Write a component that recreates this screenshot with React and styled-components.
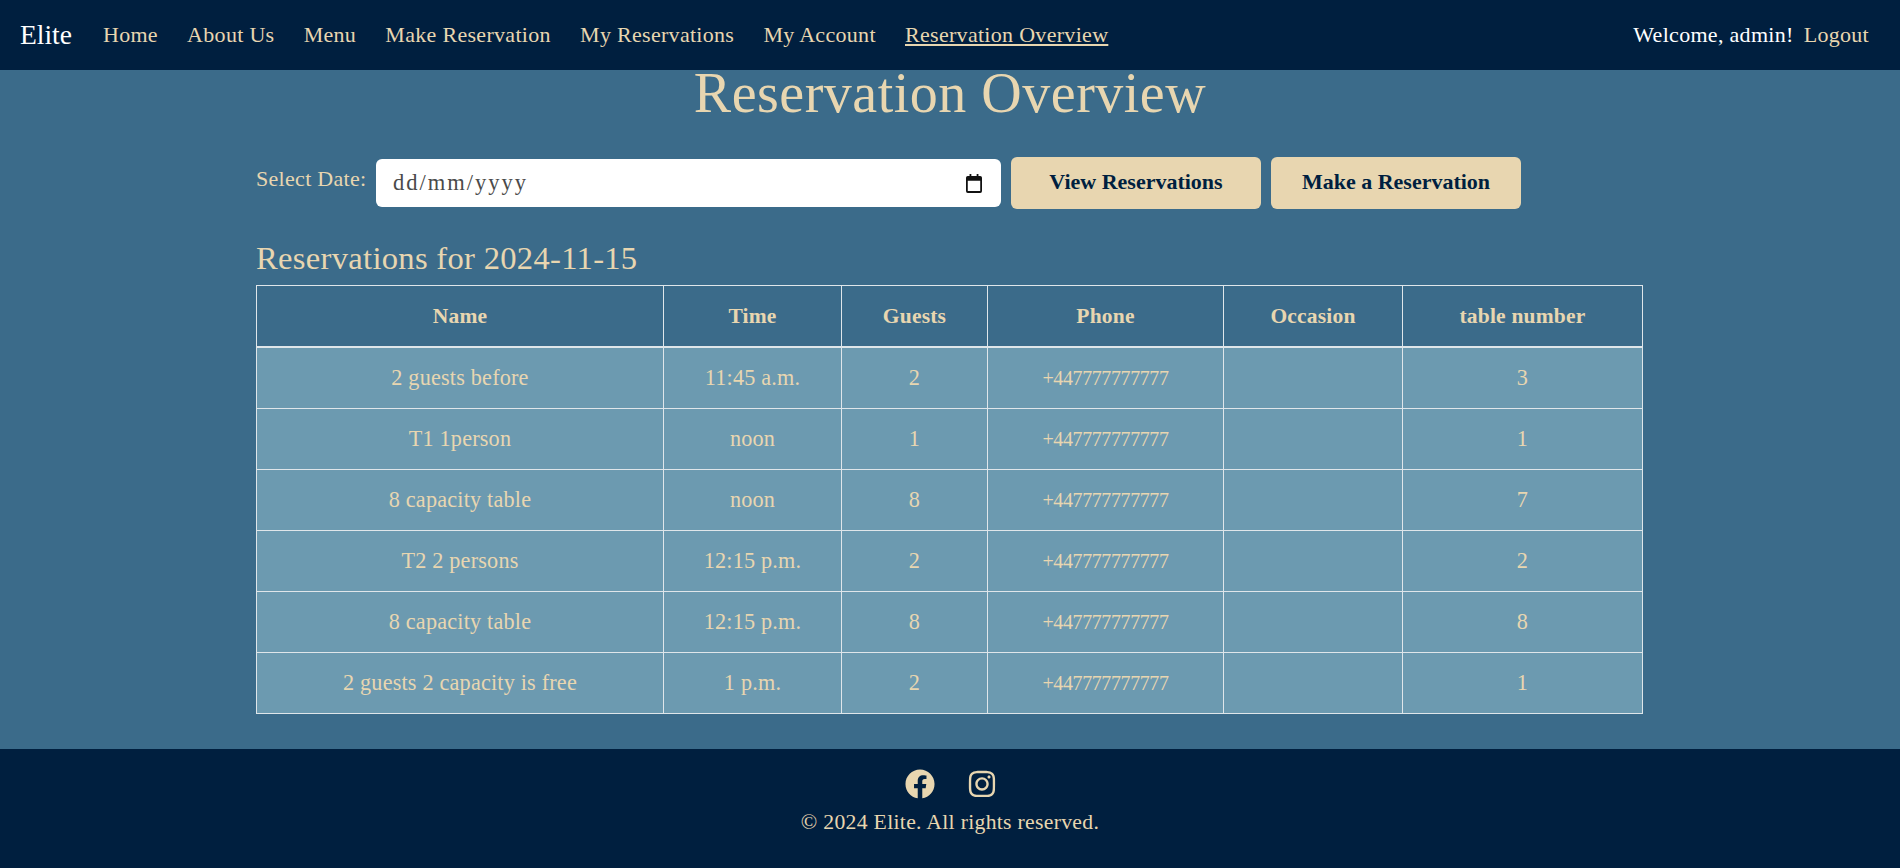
import React from "react";
import styled, { createGlobalStyle } from "styled-components";
import { FaFacebook, FaInstagram } from "react-icons/fa";

const navy = "#001f3f";
const cream = "#e8d6b0";
const serif = `"Liberation Serif", "Times New Roman", serif`;

const Global = createGlobalStyle`
  html, body { margin: 0; padding: 0; }
  body { font-family: ${serif}; background: #3b6b8a; color: ${cream}; }
`;

const Page = styled.div`
  width: 1900px;
  height: 868px;
  display: flex;
  flex-direction: column;
  background: #3b6b8a;
  overflow: hidden;
`;

const Navbar = styled.nav`
  height: 70px;
  flex: none;
  background: ${navy};
  display: flex;
  align-items: center;
  justify-content: space-between;
  padding: 0 31px 0 20px;
`;

const NavLeft = styled.div`
  display: flex;
  align-items: center;
`;

const Brand = styled.a`
  color: #fff;
  font-size: 27.5px;
  margin-right: 31px;
`;

const NavLink = styled.a`
  color: ${cream};
  font-size: 22px;
  letter-spacing: 0.3px;
  margin-right: ${(p) => (p.$last ? 0 : "29.2px")};
  text-decoration: ${(p) => (p.$active ? "underline" : "none")};
`;

const NavRight = styled.div`
  display: flex;
  align-items: center;
  gap: 10px;
  font-size: 22px;
  letter-spacing: 0.3px;
`;

const Welcome = styled.span`
  color: #fff;
`;

const Main = styled.main`
  flex: 1;
  padding: 0 256px;
`;

const Title = styled.h1`
  margin: 0;
  font-size: 56px;
  font-weight: 400;
  line-height: 46px;
  text-align: center;
  color: ${cream};
  letter-spacing: 0.5px;
`;

const DateRow = styled.div`
  display: flex;
  align-items: flex-start;
  margin-top: 43px;
`;

const DateLabel = styled.label`
  font-size: 22px;
  letter-spacing: 0.3px;
  margin-top: 7px;
  width: 120px;
`;

const DateField = styled.div`
  width: 625px;
  height: 48px;
  margin-right: 10px;
  background: #fff;
  border-radius: 6px;
  display: flex;
  align-items: center;
  justify-content: space-between;
  padding: 0 19px 0 17px;
  box-sizing: border-box;
  color: #4a4a4a;
  font-size: 22.5px;
  letter-spacing: 2px;
`;

const ActionButton = styled.button`
  width: 250px;
  height: 52px;
  margin-top: -2px;
  margin-right: 10px;
  padding: 0 0 2px;
  border: none;
  border-radius: 6px;
  background: ${cream};
  color: ${navy};
  font-family: ${serif};
  font-size: 22px;
  font-weight: 700;
`;

const SubTitle = styled.h3`
  margin: 29px 0 0;
  font-size: 32.6px;
  line-height: 40px;
  font-weight: 400;
  letter-spacing: 0.3px;
  color: ${cream};
`;

const Table = styled.table`
  width: 1386px;
  margin-top: 7px;
  table-layout: fixed;
  border-collapse: collapse;
  font-size: 22.2px;
  letter-spacing: 0.2px;
`;

const Head = styled.th`
  height: 60px;
  padding: 0;
  border: 1px solid #dfe6ea;
  border-bottom-width: 2px;
  font-weight: 700;
  font-size: 21.5px;
  letter-spacing: 0.2px;
  color: ${cream};
`;

const Cell = styled.td`
  height: 60px;
  padding: 0;
  border: 1px solid #dfe6ea;
  text-align: center;
  background: #6c9ab0;
  color: ${cream};
`;

const PhoneCell = styled(Cell)`
  font-size: 20px;
  letter-spacing: -0.4px;
`;

const Footer = styled.footer`
  height: 119px;
  flex: none;
  background: ${navy};
  display: flex;
  flex-direction: column;
  align-items: center;
  padding-top: 19px;
  box-sizing: border-box;
`;

const Socials = styled.div`
  display: flex;
  align-items: center;
  gap: 32px;
  color: ${cream};
  font-size: 30px;
  height: 31px;
  margin-left: 1px;
`;

const Copy = styled.p`
  margin: 11px 0 0;
  font-size: 21.7px;
  letter-spacing: 0.3px;
  color: ${cream};
`;

const columns = [407, 178, 146, 236, 179, 240];
const headers = ["Name", "Time", "Guests", "Phone", "Occasion", "table number"];
const rows = [
  ["2 guests before", "11:45 a.m.", "2", "3"],
  ["T1 1person", "noon", "1", "1"],
  ["8 capacity table", "noon", "8", "7"],
  ["T2 2 persons", "12:15 p.m.", "2", "2"],
  ["8 capacity table", "12:15 p.m.", "8", "8"],
  ["2 guests 2 capacity is free", "1 p.m.", "2", "1"],
];
const links = ["Home", "About Us", "Menu", "Make Reservation", "My Reservations", "My Account"];

const CalendarIcon = () => (
  <svg width="16" height="19" viewBox="0 0 18 20" preserveAspectRatio="none" aria-hidden="true">
    <path fill="#111" d="M4 0h2v2h6V0h2v2h2a2 2 0 0 1 2 2v14a2 2 0 0 1-2 2H2a2 2 0 0 1-2-2V4a2 2 0 0 1 2-2h2V0zM2 7v11h14V7H2z" />
  </svg>
);

export default function App() {
  return (
    <Page>
      <Global />
      <Navbar>
        <NavLeft>
          <Brand>Elite</Brand>
          {links.map((l) => (
            <NavLink key={l}>{l}</NavLink>
          ))}
          <NavLink $active>Reservation Overview</NavLink>
        </NavLeft>
        <NavRight>
          <Welcome>Welcome, admin!</Welcome>
          <NavLink $last>Logout</NavLink>
        </NavRight>
      </Navbar>
      <Main>
        <Title>Reservation Overview</Title>
        <DateRow>
          <DateLabel>Select Date:</DateLabel>
          <DateField>
            <span>dd/mm/yyyy</span>
            <CalendarIcon />
          </DateField>
          <ActionButton>View Reservations</ActionButton>
          <ActionButton>Make a Reservation</ActionButton>
        </DateRow>
        <SubTitle>Reservations for 2024-11-15</SubTitle>
        <Table>
          <colgroup>
            {columns.map((w, i) => (
              <col key={i} width={w} />
            ))}
          </colgroup>
          <thead>
            <tr>
              {headers.map((h) => (
                <Head key={h}>{h}</Head>
              ))}
            </tr>
          </thead>
          <tbody>
            {rows.map((r, i) => (
              <tr key={i}>
                <Cell>{r[0]}</Cell>
                <Cell>{r[1]}</Cell>
                <Cell>{r[2]}</Cell>
                <PhoneCell>+447777777777</PhoneCell>
                <Cell></Cell>
                <Cell>{r[3]}</Cell>
              </tr>
            ))}
          </tbody>
        </Table>
      </Main>
      <Footer>
        <Socials>
          <FaFacebook />
          <FaInstagram />
        </Socials>
        <Copy>© 2024 Elite. All rights reserved.</Copy>
      </Footer>
    </Page>
  );
}
